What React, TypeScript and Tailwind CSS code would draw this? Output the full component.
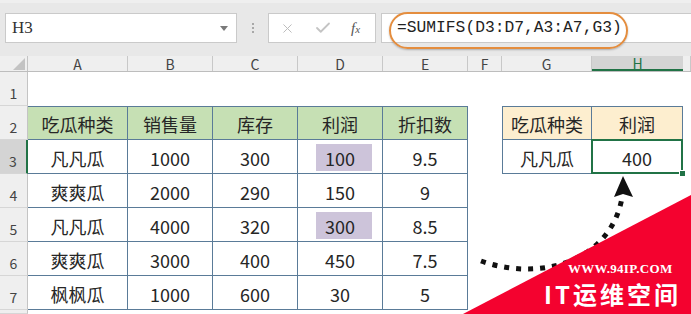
import React from "react";
import { X, Check } from "lucide-react";

const COLS = ["A", "B", "C", "D", "E", "F", "G", "H", ""];
const WIDTHS = [
  "w-[100px]",
  "w-[85px]",
  "w-[85px]",
  "w-[85px]",
  "w-[85px]",
  "w-[34px]",
  "w-[90px]",
  "w-[91px]",
  "w-[8px]",
];

const DATA: Record<number, (string | null)[]> = {
  2: ["吃瓜种类", "销售量", "库存", "利润", "折扣数", null, "吃瓜种类", "利润"],
  3: ["凡凡瓜", "1000", "300", "100", "9.5", null, "凡凡瓜", "400"],
  4: ["爽爽瓜", "2000", "290", "150", "9"],
  5: ["凡凡瓜", "4000", "320", "300", "8.5"],
  6: ["爽爽瓜", "3000", "400", "450", "7.5"],
  7: ["枫枫瓜", "1000", "600", "30", "5"],
};

const Cell = ({ r, c }: { r: number; c: number }) => {
  const inMain = r >= 2 && r <= 7 && c <= 4;
  const inRight = r >= 2 && r <= 3 && (c === 6 || c === 7);
  const text = DATA[r]?.[c] ?? "";
  const bg =
    r === 2 && inMain
      ? "bg-[#c6e0b4]"
      : r === 2 && inRight
        ? "bg-[#fdeecf]"
        : "bg-white";
  const border =
    inMain || inRight
      ? "border-r border-b border-[#5a7b98]" +
        (r === 2 ? " border-t" : "") +
        (c === 6 ? " border-l" : "")
      : "";
  const mark = c === 3 && (r === 3 || r === 5);
  const selected = r === 3 && c === 7;

  return (
    <div
      className={`${WIDTHS[c]} ${bg} ${border} relative h-full shrink-0 flex items-center justify-center pt-[3px] text-[18px] text-[#262626]`}
    >
      {mark && (
        <div className="absolute left-[18px] top-[4px] w-[56px] h-[27px] bg-[#cdc4da]" />
      )}
      <span className="relative">{text}</span>
      {selected && (
        <>
          <div className="absolute -inset-[1px] border-2 border-[#217346] z-10" />
          <div className="absolute -right-[4px] -bottom-[4px] w-[7px] h-[7px] bg-[#217346] border border-white z-20" />
        </>
      )}
    </div>
  );
};

const SheetRow = ({ r }: { r: number }) => {
  const sel = r === 3;
  return (
    <div className={`flex ${r === 8 ? "h-[4px]" : "h-[34px]"}`}>
      <div
        className={`w-[28px] shrink-0 flex items-end justify-center pb-[1px] text-[14px] text-[#444] border-b border-[#d6d6d6] ${
          sel
            ? "bg-[#d4d4d4] border-r-2 border-r-[#217346]"
            : "bg-[#efefef] border-r border-r-[#c4c4c4]"
        }`}
      >
        {r < 8 ? r : ""}
      </div>
      {COLS.map((_, c) => (
        <Cell key={c} r={r} c={c} />
      ))}
    </div>
  );
};

export default function App() {
  return (
    <div
      className="relative w-[691px] h-[314px] overflow-hidden bg-white"
      style={{ fontFamily: '"Noto Sans CJK SC", "Noto Sans", sans-serif' }}
    >
      {/* formula bar */}
      <div className="h-[56px] bg-[#e8e8e8] border-t-[3px] border-[#efefef] flex items-start pt-[10px] pl-[5px]">
        <div className="w-[232px] h-[30px] bg-white border border-[#cacaca] flex items-center justify-between pl-[6px] pr-[8px]">
          <span className="text-[17px] text-[#333] font-['Liberation_Serif',serif]">
            H3
          </span>
          <svg width="8" height="5" viewBox="0 0 8 5">
            <path d="M0 0 L8 0 L4 5 Z" fill="#7a7a7a" />
          </svg>
        </div>
        <div className="w-[31px] h-[30px] flex flex-col items-center justify-center gap-[2px]">
          <span className="w-[2px] h-[2px] bg-[#a8a8a8]" />
          <span className="w-[2px] h-[2px] bg-[#a8a8a8]" />
          <span className="w-[2px] h-[2px] bg-[#a8a8a8]" />
        </div>
        <div className="w-[108px] h-[30px] bg-white border border-[#cacaca] flex items-center pl-[11px]">
          <X size={15} strokeWidth={1.6} className="text-[#bdbdbd]" />
          <Check size={18} strokeWidth={2.4} className="text-[#c4c4c4] ml-[19px]" />
          <span className="ml-[19px] italic text-[15px] text-[#555] font-['Liberation_Serif',serif]">
            f<span className="text-[11px]">x</span>
          </span>
        </div>
        <div className="relative flex-1 ml-[5px] h-[30px] bg-white border-y border-l border-[#cacaca] flex items-center pl-[15px]">
          <div className="absolute left-[7px] -top-[2px] w-[239px] h-[37px] rounded-full border-2 border-[#e48d3e] shadow-[0_1px_2px_rgba(0,0,0,0.25)]" />
          <span className="relative text-[16.3px] text-[#222] font-['Liberation_Mono',monospace] pt-[1px]">
            =SUMIFS(D3:D7,A3:A7,G3)
          </span>
        </div>
      </div>

      {/* column headers */}
      <div className="flex h-[16px] bg-[#efefef] border-b border-[#bdbdbd]">
        <div className="w-[28px] shrink-0 flex items-end justify-end pr-[2px] pb-[1px] border-r border-[#c4c4c4]">
          <svg width="12" height="12" viewBox="0 0 12 12">
            <path d="M12 0 L12 12 L0 12 Z" fill="#c3c3c3" />
          </svg>
        </div>
        {COLS.map((l, c) => (
          <div
            key={c}
            className={`${WIDTHS[c]} shrink-0 flex items-center justify-center text-[14px] leading-none ${
              l === "H"
                ? "bg-[#d4d4d4] text-[#217346] border-b-2 border-[#217346]"
                : "text-[#444] border-r border-[#c8c8c8]"
            }`}
          >
            {l}
          </div>
        ))}
      </div>

      {[1, 2, 3, 4, 5, 6, 7, 8].map((r) => (
        <SheetRow key={r} r={r} />
      ))}

      {/* annotation arrow + watermark */}
      <svg
        className="absolute inset-0 pointer-events-none"
        width="691"
        height="314"
        viewBox="0 0 691 314"
      >
        <path
          d="M481 261 C 540 282 610 262 622 198"
          fill="none"
          stroke="#111"
          strokeWidth="5"
          strokeDasharray="5 7"
        />
        <path d="M623 176 L614 197 L623 194 L633 197 Z" fill="#111" />
        <polygon points="463,314 691,195 691,314" fill="#f4022f" />
      </svg>
      <div className="absolute left-[568px] top-[262px] whitespace-nowrap text-[13px] leading-[13px] font-bold text-white tracking-[0.3px] font-['Liberation_Serif',serif]">
        WWW.94IP.COM
      </div>
      <div className="absolute left-[544px] top-[280px] whitespace-nowrap text-[24px] leading-[28px] font-bold text-white tracking-[3px]">
        IT运维空间
      </div>
    </div>
  );
}
